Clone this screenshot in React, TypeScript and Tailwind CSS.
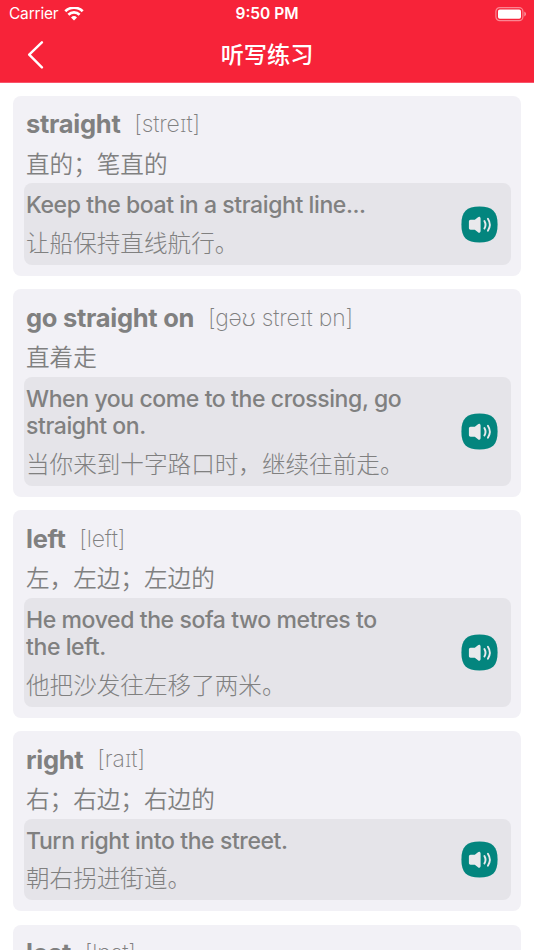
type Word = {
  word: string;
  phonetic: string;
  meaning: string;
  example: string[];
  translation: string;
};

const words: Word[] = [
  {
    word: "straight",
    phonetic: "[streɪt]",
    meaning: "直的；笔直的",
    example: ["Keep the boat in a straight line..."],
    translation: "让船保持直线航行。",
  },
  {
    word: "go straight on",
    phonetic: "[gəʊ streɪt ɒn]",
    meaning: "直着走",
    example: ["When you come to the crossing, go", "straight on."],
    translation: "当你来到十字路口时，继续往前走。",
  },
  {
    word: "left",
    phonetic: "[left]",
    meaning: "左，左边；左边的",
    example: ["He moved the sofa two metres to", "the left."],
    translation: "他把沙发往左移了两米。",
  },
  {
    word: "right",
    phonetic: "[raɪt]",
    meaning: "右；右边；右边的",
    example: ["Turn right into the street."],
    translation: "朝右拐进街道。",
  },
  {
    word: "lost",
    phonetic: "[lɒst]",
    meaning: "迷路的",
    example: ["We got lost in the old town."],
    translation: "我们在老城里迷路了。",
  },
];

function StatusBar() {
  return (
    <div className="grid h-7 grid-cols-3 items-center pl-[9px] pr-[8px] text-[15.5px] leading-7">
      <div className="flex items-center gap-[6px]">
        <span className="tracking-[-0.2px]">Carrier</span>
        <svg width="20" height="15" viewBox="0 0 20 15" fill="none">
          <g stroke="white" strokeWidth="2.7">
            <path d="M1.3 4.3a12.4 12.4 0 0 1 17.4 0" />
            <path d="M4.4 7.7a8 8 0 0 1 11.2 0" />
          </g>
          <path d="M10 13.5l-3-3a4.3 4.3 0 0 1 6 0z" fill="white" />
        </svg>
      </div>
      <span className="-ml-px text-center font-semibold">9:50 PM</span>
      <svg
        className="justify-self-end"
        width="31"
        height="15"
        viewBox="0 0 31 15"
        fill="none">
        <rect
          x="0.9"
          y="0.6"
          width="27"
          height="13"
          rx="3.8"
          stroke="white"
          strokeOpacity="0.45"
          strokeWidth="1.2"
        />
        <rect x="3" y="2.5" width="23" height="9.2" rx="1.8" fill="white" />
        <path
          d="M29.3 4.6v5c1-.4 1.7-1.3 1.7-2.5s-.7-2.1-1.7-2.5z"
          fill="white"
          fillOpacity="0.5"
        />
      </svg>
    </div>
  );
}

function SpeakerButton() {
  return (
    <button className="shrink-0">
      <svg width="37" height="37" viewBox="0 0 37 37" fill="none">
        <path
          d="M18.5.4C31.5.4 36.6 5.500 36.6 18.500S31.500 36.600 18.500 36.600.4 31.500.4 18.500 5.500.4 18.500.4z"
          fill="#03857E"
        />
        <path
          d="M9.6 13.8h4.2l3.2-2.5c.4-.5 1-.7 1.5-.5.7.2 1.1.9 1.1 1.7v12.500c0 .8-.4 1.500-1.100 1.700-.5.2-1.100 0-1.500-.5l-3.200-2.500H9.600c-1 0-1.700-.7-1.700-1.700v-6.500c0-1 .7-1.700 1.700-1.700z"
          fill="#E9E9EC"
        />
        <g stroke="#E9E9EC" strokeWidth="1.9" strokeLinecap="round">
          <path d="M23.4 15c1.3 2.2 1.3 5.3 0 7.5" />
          <path d="M26.9 12.8c2.3 3.5 2.3 8.4 0 11.9" />
        </g>
      </svg>
    </button>
  );
}

function WordCard({ word, phonetic, meaning, example, translation }: Word) {
  return (
    <li className="rounded-lg bg-[#F2F1F6] px-[10.5px] pt-[11px] pb-[11.3px]">
      <div className="flex h-[35px] items-center gap-[13.8px] whitespace-nowrap pl-[2.5px]">
        <h2 className="text-[25.5px] font-bold tracking-[-0.28px]">{word}</h2>
        <p className="text-[23px] font-extralight tracking-[-0.15px]">
          {phonetic}
        </p>
      </div>
      <p className="h-[41.4px] pl-[2.5px] text-[23.6px] leading-[45px] font-[350]">
        {meaning}
      </p>
      <div className="flex items-center justify-between rounded-lg bg-[#E5E4E9] pr-[13px] pl-[2.5px]">
        <div className="whitespace-nowrap pt-[9px] pb-[2px]">
          {example.map((line) => (
            <p
              key={line}
              className="text-[23px] leading-[27.5px] font-medium tracking-[-0.4px]">
              {line}
            </p>
          ))}
          <p className="mt-[5px] text-[23.6px] leading-[38px] font-light">
            {translation}
          </p>
        </div>
        <SpeakerButton />
      </div>
    </li>
  );
}

export default function App() {
  return (
    <div className="h-[950px] w-[534px] overflow-hidden bg-white font-['Inter','Noto_Sans','Noto_Sans_CJK_SC',sans-serif]">
      <header className="h-[83px] border-b border-[#F9536A] bg-[#F72339] text-white">
        <StatusBar />
        <div className="grid h-[54px] grid-cols-[1fr_auto_1fr] items-center">
          <button className="pl-[27px]">
            <svg
              width="18"
              height="28"
              viewBox="0 0 18 28"
              fill="none"
              stroke="white"
              strokeWidth="2.4"
              strokeLinecap="round"
              strokeLinejoin="round">
              <path d="M14.9 1.3 2.2 13.7l12.7 12.7" />
            </svg>
          </button>
          <h1 className="text-[23.2px] font-medium">听写练习</h1>
        </div>
      </header>
      <ul className="flex flex-col gap-[13.2px] px-[13px] pt-[13px] text-[#808080]">
        {words.map((item) => (
          <WordCard key={item.word} {...item} />
        ))}
      </ul>
    </div>
  );
}
